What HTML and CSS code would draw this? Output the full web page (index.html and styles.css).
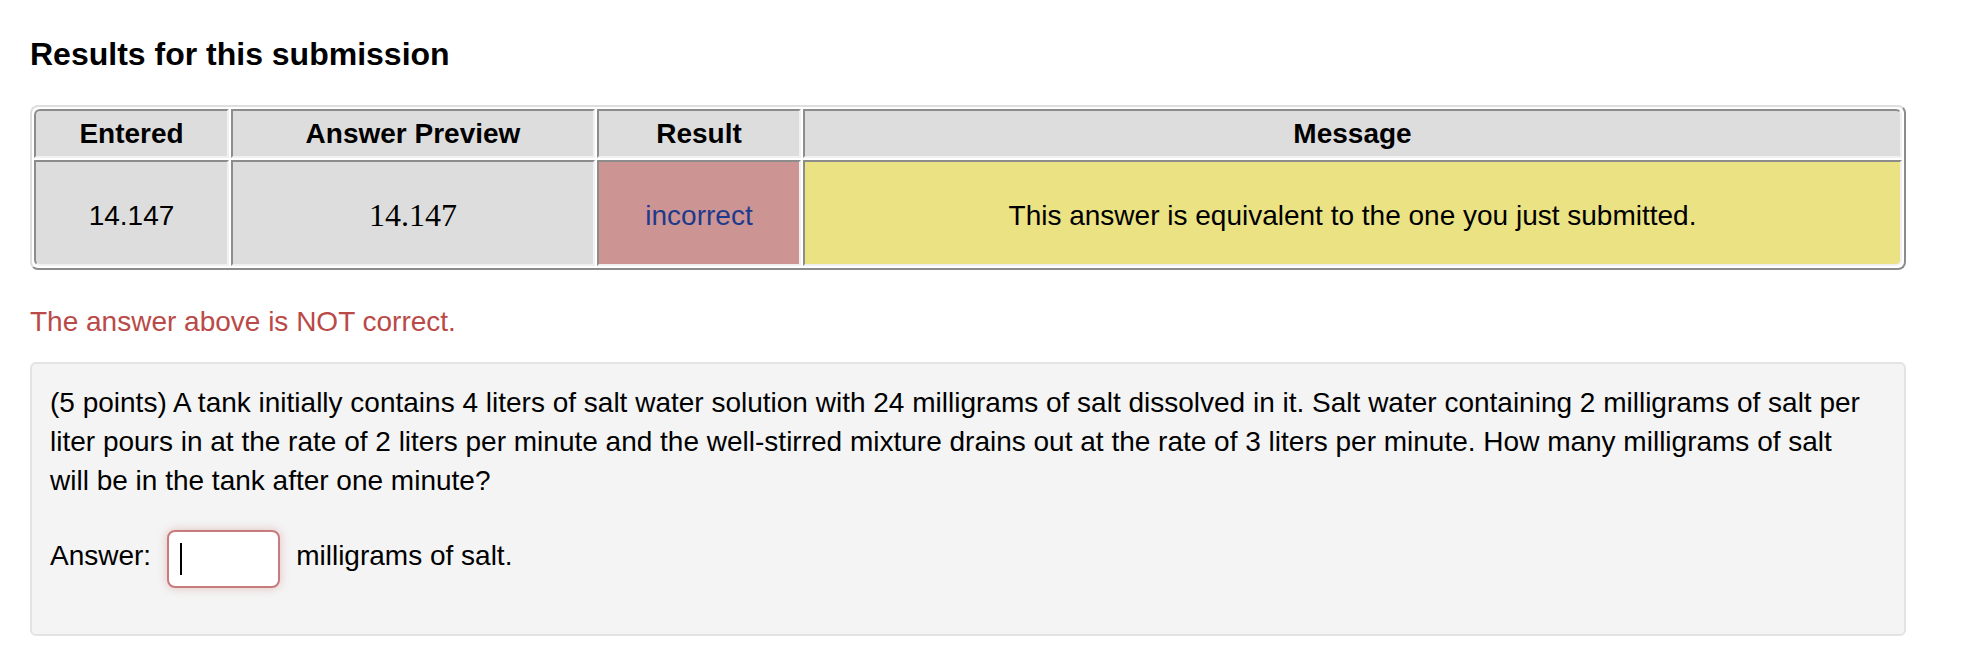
FILE: index.html
```html
<!DOCTYPE html>
<html lang="en">
<head>
    <meta charset="UTF-8">
    <meta name="viewport" content="width=device-width, initial-scale=1.0">
    <title>Results for this submission</title>
    <link rel="stylesheet" href="styles.css">
</head>
<body>
    <div class="page">
        <h2>Results for this submission</h2>

        <table class="attempt-results">
            <tr>
                <th class="col-entered">Entered</th>
                <th class="col-preview">Answer Preview</th>
                <th class="col-result">Result</th>
                <th class="col-message">Message</th>
            </tr>
            <tr>
                <td>14.147</td>
                <td class="preview">14.147</td>
                <td class="result-incorrect">incorrect</td>
                <td class="message">This answer is equivalent to the one you just submitted.</td>
            </tr>
        </table>

        <p class="text-error">The answer above is NOT correct.</p>

        <div class="problem">
            <p class="question">(5 points) A tank initially contains 4 liters of salt water solution with 24 milligrams of salt dissolved in it. Salt water containing 2 milligrams of salt per liter pours in at the rate of 2 liters per minute and the well-stirred mixture drains out at the rate of 3 liters per minute. How many milligrams of salt will be in the tank after one minute?</p>

            <div class="answer-row">
                <span class="label">Answer:</span>
                <span class="answer-box"><span class="caret"></span></span>
                <span class="label">milligrams of salt.</span>
            </div>
        </div>
    </div>
</body>
</html>
```

FILE: styles.css
```css
body {
    margin: 0;
    font-family: "Liberation Sans", Arial, Helvetica, sans-serif;
    font-size: 28px;
    color: #000;
    background: #fff;
}
.page {
    width: 1876px;
    padding-left: 30px;
}
h2 {
    font-size: 32px;
    line-height: 37px;
    font-weight: bold;
    margin: 36px 0 0;
}

/* results table */
.attempt-results {
    width: 1876px;
    margin-top: 32px;
    table-layout: fixed;
    border-collapse: separate;
    border-spacing: 2px;
    border: 2px solid;
    border-color: #dedede #8c8c8c #8c8c8c #dedede;
    border-radius: 8px;
}
.attempt-results th,
.attempt-results td {
    box-sizing: border-box;
    border: 2px solid;
    border-color: #8c8c8c #f1f1f1 #f1f1f1 #8c8c8c;
    background-color: #dddddd;
    text-align: center;
    line-height: 33px;
}
.attempt-results th {
    height: 49px;
    padding: 6px 4px;
    font-weight: bold;
}
.attempt-results td {
    height: 106px;
    padding: 7px 4px 3px;
    vertical-align: middle;
}
.attempt-results tr:first-child th:first-child { border-top-left-radius: 6px; }
.attempt-results tr:first-child th:last-child { border-top-right-radius: 6px; }
.attempt-results tr:last-child td:first-child { border-bottom-left-radius: 6px; }
.attempt-results tr:last-child td:last-child { border-bottom-right-radius: 6px; }

.col-entered { width: 195px; }
.col-preview { width: 364px; }
.col-result { width: 204px; }

.attempt-results td.preview {
    font-family: "Liberation Serif", "Times New Roman", serif;
    font-size: 32px;
}
.attempt-results td.result-incorrect {
    background-color: #cd9494;
    color: #1d3a8c;
}
.attempt-results td.message {
    background-color: #ebe283;
}

.text-error {
    color: #b94a48;
    line-height: 40px;
    margin: 32px 0 0;
}

/* problem well */
.problem {
    margin-top: 20px;
    background-color: #f4f4f4;
    border: 2px solid #e3e3e3;
    border-radius: 6px;
    padding: 19px 36px 46px 18px;
}
.question {
    line-height: 39px;
    margin: 0 0 30px;
}
.answer-row {
    display: flex;
    align-items: flex-start;
    gap: 16px;
}
.answer-row .label {
    padding-top: 6px;
    line-height: 39px;
}
.answer-box {
    display: flex;
    align-items: center;
    box-sizing: border-box;
    width: 113px;
    height: 58px;
    padding-left: 11px;
    background: #fff;
    border: 2px solid #c87b7b;
    border-radius: 8px;
    box-shadow: 0 0 10px rgba(185, 74, 72, 0.3);
}
.caret {
    width: 2px;
    height: 32px;
    background: #000;
}
```
